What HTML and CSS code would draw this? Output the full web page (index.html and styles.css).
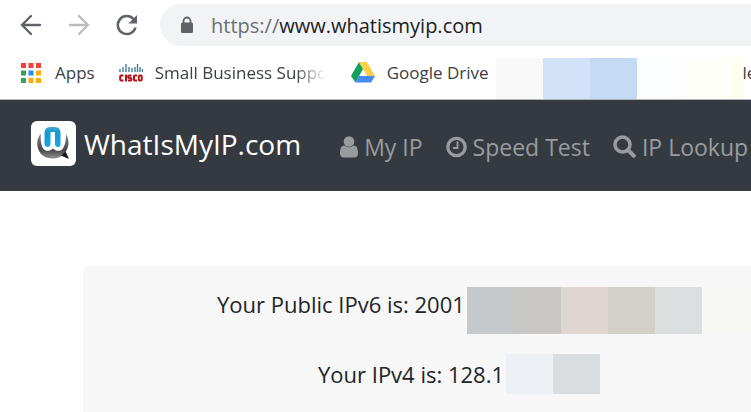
FILE: index.html
```html
<!DOCTYPE html>
<html lang="en">
<head>
  <meta charset="UTF-8" />
  <meta name="viewport" content="width=device-width, initial-scale=1.0"/>
  <title>WhatIsMyIP.com</title>
  <link rel="stylesheet" href="styles.css">
</head>
<body>

<!-- Toolbar -->
<div class="toolbar">
  <button class="tool-btn" aria-label="Back">
    <svg width="24" height="24" viewBox="0 0 24 24" fill="none" stroke="#5f6368" stroke-width="2.3" stroke-linecap="round"><path d="M21 12H3.5M12 3L3 12l9 9"/></svg>
  </button>
  <button class="tool-btn" aria-label="Forward" disabled>
    <svg width="24" height="24" viewBox="0 0 24 24" fill="none" stroke="#babcbe" stroke-width="2.3" stroke-linecap="round"><path d="M3 12h17.500M12 3l9 9-9 9"/></svg>
  </button>
  <button class="tool-btn" aria-label="Reload">
    <svg width="24" height="24" viewBox="0 0 24 24" fill="none" stroke="#5f6368" stroke-width="2.5"><path d="M20.500 14.500A9 9 0 1 1 18.500 6"/><path d="M22 2v8.500h-8.500z" fill="#5f6368" stroke="none"/></svg>
  </button>
  <div class="omnibox">
    <svg class="lock" width="14" height="18" viewBox="0 0 14 18"><path d="M3.500 8V5a3.500 3.500 0 0 1 7 0v3" fill="none" stroke="#5f6368" stroke-width="1.800"/><rect x="1" y="6.500" width="12" height="10.500" rx="1.500" fill="#5f6368"/></svg>
    <label class="scheme" for="address">https://</label>
    <input type="text" id="address" class="address" value="www.whatismyip.com" />
  </div>
</div>

<!-- Bookmarks -->
<div class="bookmarks">
  <a href="#" class="bookmark apps">
    <svg width="20" height="20" viewBox="0 0 20 20">
      <path d="M0 0h5v5H0zM7.500 0h5v5h-5zM15 0h5v5h-5z" fill="#f44336"/>
      <path d="M0 7.500h5v5H0zM0 15h5v5H0z" fill="#34a35a"/>
      <path d="M7.500 7.500h5v5h-5z" fill="#2a8cf5"/>
      <path d="M15 7.500h5v5h-5zM7.500 15h5v5h-5zM15 15h5v5h-5z" fill="#fbab0c"/>
    </svg>
    Apps
  </a>
  <a href="#" class="bookmark cisco">
    <svg width="24" height="20" viewBox="0 0 24 20" fill="none">
      <path d="M1 6v3M4 4v5M7 1v8M10 4v5M13 5v4M16 4v5M18.500 1v8M21 4v5M23.500 6v3" stroke="#467f9b" stroke-width="1.400"/>
      <path d="M4.500 12.500H2.200a1 1 0 0 0-1 1v3a1 1 0 0 0 1 1h2.300M7 11.500v7M12.500 12.500H10.300a1 1 0 0 0 0 2.500h1a1.200 1.200 0 0 1 0 2.500H9M18 12.500h-2a1 1 0 0 0-1 1v3a1 1 0 0 0 1 1h2" stroke="#b01217" stroke-width="2"/>
      <rect x="19.800" y="12.500" width="3" height="5" rx="1" stroke="#b01217" stroke-width="1.900"/>
    </svg>
    <span class="fade">Small Business Support</span>
  </a>
  <a href="#" class="bookmark drive">
    <svg width="24" height="21" viewBox="0 0 24 21">
      <path d="M8 0l4 7-7.500 13.500L0 14z" fill="#11a05d"/>
      <path d="M8 0h8l8 14h-8z" fill="#ffcf48"/>
      <path d="M8 14h16l-4 6.500H4.500z" fill="#4688f4"/>
    </svg>
    Google Drive
  </a>
  <div class="mosaic mosaic-top">
    <i class="tile mist"></i><i class="tile sky"></i><i class="tile blue"></i><i class="tile ice"></i><i class="tile ivory"></i><i class="tile cream"></i>
  </div>
  <a href="#" class="bookmark">le</a>
</div>

<!-- Navbar -->
<nav class="navbar">
  <a href="#" class="brand">
    <svg width="45" height="45" viewBox="0 0 45 45">
      <defs>
        <linearGradient id="ring" x1="0" y1="0" x2="0" y2="1"><stop offset="0" stop-color="#999"/><stop offset=".3" stop-color="#666"/><stop offset=".65" stop-color="#48484a"/><stop offset="1" stop-color="#909090"/></linearGradient>
        <linearGradient id="cap" x1="0" y1="0" x2="0" y2="1"><stop offset="0" stop-color="#4aa9cf"/><stop offset=".25" stop-color="#149bd7"/><stop offset="1" stop-color="#18a5df"/></linearGradient>
      </defs>
      <rect width="45" height="45" rx="6" fill="#fff"/>
      <path d="M9.500 13C5 18 5 27 10 33c6 6 17 6 23 0 5-5 6-14 2-20z" fill="url(#ring)"/>
      <path d="M30 34.500l8 3.500-2-4.500-1.500-3z" fill="#1c1c1c"/>
      <path d="M10 10h25c0 7 0 12-2.500 16.500-2 4-7 4.500-10.500 1-4 3.500-8.500 3-10.500-1C9.500 22 9.500 17 10 10z" fill="#fff"/>
      <path d="M13.500 23.500V12q0-6 5.500-6h5q5.500 0 5.500 6v11.500q0 2.500-2.500 2.500t-3-2.500V11h-4.500v12.500q-.5 2.500-3 2.500t-3-2.500z" fill="url(#cap)"/>
    </svg>
    WhatIsMyIP.com
  </a>
  <a href="#" class="nav-link">
    <svg width="18" height="22" viewBox="0 0 18 22" fill="currentColor"><circle cx="9" cy="5.500" r="5.300"/><path d="M4.500 9.500C1 9.500 0 13 0 17.500 0 20 1.500 21.500 4 21.500h10c2.500 0 4-1.500 4-4 0-4.500-1-8-4.500-8a6.500 6.500 0 0 1-9 0z"/></svg>
    My IP
  </a>
  <a href="#" class="nav-link">
    <svg width="21" height="22" viewBox="0 0 21 22" fill="none" stroke="currentColor"><circle cx="10.500" cy="11" r="8.700" stroke-width="3.300"/><path d="M11.500 5.500V12H7" stroke-width="1.900"/></svg>
    Speed Test
  </a>
  <a href="#" class="nav-link">
    <svg width="23" height="23" viewBox="0 0 23 23" fill="none" stroke="currentColor"><circle cx="9.500" cy="9.500" r="7.500" stroke-width="3.600"/><path d="M15 15l5.800 5.800" stroke-width="4" stroke-linecap="round"/></svg>
    IP Lookup
  </a>
</nav>

<main>
  <div class="card">
    <div class="ip-row ipv6">
      <span>Your Public IPv6 is: 2001</span>
      <div class="mosaic">
        <i class="tile slate"></i><i class="tile gray"></i><i class="tile rose"></i><i class="tile sand"></i><i class="tile silver"></i><i class="tile pale"></i>
      </div>
    </div>
    <div class="ip-row ipv4">
      <span>Your IPv4 is: 128.1</span>
      <div class="mosaic">
        <i class="tile frost"></i><i class="tile steel"></i>
      </div>
    </div>
  </div>
</main>

</body>
</html>
```
FILE: styles.css
```css
* { margin: 0; padding: 0; box-sizing: border-box; }
body {
  font-family: "Open Sans", "Noto Sans", sans-serif;
  background: #fff;
  color: #212529;
  display: flex;
  flex-direction: column;
  height: 100vh;
  overflow: hidden;
}

a {
  text-decoration: none;
  white-space: nowrap;
}

svg {
  flex-shrink: 0;
}

/* Toolbar */
.toolbar {
  display: flex;
  align-items: center;
  gap: 24px;
  padding: 4px 0 0 19px;
}

.tool-btn {
  width: 24px;
  height: 24px;
  background: none;
  border: none;
}

.omnibox {
  flex: 1;
  display: flex;
  align-items: center;
  height: 42px;
  margin-left: -3px;
  padding-left: 20px;
  background: #f1f3f4;
  border-radius: 21px 0 0 21px;
  font-size: 20px;
}

.lock {
  margin-right: 17px;
}

.scheme {
  color: #6b6f74;
}

.address {
  flex: 1;
  min-width: 0;
  font: inherit;
  color: #202124;
  background: none;
  border: none;
  outline: none;
}

/* Bookmarks */
.bookmarks {
  display: flex;
  align-items: center;
  height: 54px;
  padding-left: 21px;
  border-bottom: 1px solid #b2b4b6;
}

.bookmark {
  display: flex;
  align-items: center;
  font-size: 17px;
  color: #3c4043;
}

.apps {
  gap: 14px;
  margin-right: 24px;
}

.cisco {
  gap: 12px;
  margin-right: 25px;
}

.drive {
  gap: 12px;
  margin-right: 7px;
}

.fade {
  width: 171px;
  overflow: hidden;
  -webkit-mask-image: linear-gradient(to right, #000 82%, transparent);
  mask-image: linear-gradient(to right, #000 82%, transparent);
}

/* Blurred out areas */
.mosaic {
  display: flex;
}

.mosaic-top {
  align-self: flex-end;
}

.tile {
  width: 47px;
  height: 47px;
}

.mosaic-top .tile { height: 41px; }
.ipv4 .tile { height: 40px; }

.mist { background: #f8f8f8; }
.sky { background: #d2e2f8; }
.blue { background: #c5daf5; }
.ice { background: #fcfdff; }
.ivory { background: #fffffa; }
.mosaic-top .cream { background: #fffff0; width: 12px; }
.slate { background: #c5c9cc; }
.gray { background: #c9c7c5; }
.rose { background: #dfd6d1; }
.sand { background: #d3d0c9; }
.silver { background: #dbdfe0; }
.pale { background: #f7f8f3; }
.frost { background: #edf1f5; }
.steel { background: #d9dde0; }

/* Navbar */
.navbar {
  display: flex;
  align-items: center;
  gap: 23px;
  height: 91px;
  padding: 0 0 4px 31px;
  background: #343a40;
}

.brand {
  display: flex;
  align-items: center;
  gap: 8px;
  margin-right: 16px;
  font-size: 28px;
  line-height: 36px;
  color: #fff;
}

.nav-link {
  display: flex;
  align-items: center;
  gap: 6px;
  padding-top: 6px;
  font-size: 23px;
  color: #999c9f;
}

/* Content */
main {
  flex: 1;
  display: flex;
  padding: 75px 0 0 83px;
}

.card {
  flex: 1;
  padding-top: 21px;
  background: #f7f7f7;
  border-radius: 5px 0 0 0;
}

.ip-row {
  display: flex;
  gap: 2px;
  font-size: 22px;
  line-height: 34px;
  white-space: nowrap;
}

.ipv6 {
  padding-left: 134px;
  margin-bottom: 20px;
}

.ipv4 {
  align-items: center;
  padding-left: 235px;
}
```
